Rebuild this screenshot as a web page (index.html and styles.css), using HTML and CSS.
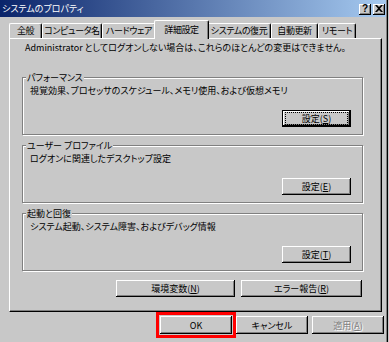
FILE: index.html
```html
<!DOCTYPE html>
<html lang="ja">
<head>
    <meta charset="UTF-8">
    <title>システムのプロパティ</title>
    <link rel="stylesheet" href="styles.css">
</head>
<body>
    <div class="window">
        <div class="titlebar">
            <span class="title">システムのプロパティ</span>
            <span class="caption-btns">
                <button class="cap-btn help">?</button>
                <button class="cap-btn close">
                    <svg width="8" height="7" viewBox="0 0 8 7">
                        <path d="M0 0h2l2 2 2-2h2L5 3.5 8 7H6L4 5 2 7H0l3-3.5z" fill="#000"/>
                    </svg>
                </button>
            </span>
        </div>

        <div class="tabs">
            <span class="tab t-general">全般</span>
            <span class="tab t-name">コンピュータ名</span>
            <span class="tab t-hw">ハードウェア</span>
            <span class="tab t-adv active">詳細設定</span>
            <span class="tab t-restore">システムの復元</span>
            <span class="tab t-update">自動更新</span>
            <span class="tab t-remote">リモート</span>
        </div>

        <div class="panel">
            <p class="note">Administrator としてログオンしない場合は、これらのほとんどの変更はできません。</p>

            <fieldset class="group">
                <legend>パフォーマンス</legend>
                <p class="desc">視覚効果、プロセッサのスケジュール、メモリ使用、および仮想メモリ</p>
                <div class="group-actions">
                    <button class="btn default"><span class="focus">設定(<u>S</u>)</span></button>
                </div>
            </fieldset>

            <fieldset class="group">
                <legend>ユーザー プロファイル</legend>
                <p class="desc">ログオンに関連したデスクトップ設定</p>
                <div class="group-actions">
                    <button class="btn">設定(<u>E</u>)</button>
                </div>
            </fieldset>

            <fieldset class="group">
                <legend>起動と回復</legend>
                <p class="desc">システム起動、システム障害、およびデバッグ情報</p>
                <div class="group-actions">
                    <button class="btn">設定(<u>T</u>)</button>
                </div>
            </fieldset>

            <div class="panel-actions">
                <button class="btn env">環境変数(<u>N</u>)</button>
                <button class="btn err">エラー報告(<u>R</u>)</button>
            </div>
        </div>

        <div class="dialog-actions">
            <button class="btn marked">OK</button>
            <button class="btn">キャンセル</button>
            <button class="btn" disabled>適用(<u>A</u>)</button>
        </div>
    </div>
</body>
</html>
```

FILE: styles.css
```css
* {
    box-sizing: border-box;
}
body {
    margin: 0;
    background: #c8c8c8;
}
body, button {
    font-family: "Noto Sans CJK JP", "Noto Sans", sans-serif;
    font-size: 9px;
    font-feature-settings: "palt";
    color: #000;
}
p {
    margin: 0;
}
.window {
    width: 388px;
    height: 342px;
    overflow: hidden;
    background: #c8c8c8;
    border-right: 1px solid #000;
    box-shadow: inset -1px 0 #808080;
}

/* title bar */
.titlebar {
    display: flex;
    align-items: center;
    justify-content: space-between;
    height: 17px;
    margin-right: 1px;
    padding: 1px 1px 0 2px;
    background: linear-gradient(to right, #0a246a, #a6caf0);
}
.title {
    color: #fff;
    line-height: 14px;
}
.caption-btns {
    display: flex;
    gap: 2px;
}
.cap-btn {
    display: flex;
    align-items: center;
    justify-content: center;
    width: 12px;
    height: 11px;
    padding: 0;
    border: 0;
    background: #c8c8c8;
    box-shadow: inset -1px -1px #000, inset 1px 1px #fff, inset -2px -2px #808080;
}
.cap-btn.help {
    font-family: "Liberation Sans", sans-serif;
    font-weight: bold;
    font-size: 10px;
    line-height: 10px;
    padding-bottom: 1px;
}
.cap-btn svg {
    display: block;
    margin: 0 1px 1px 0;
}

/* tabs */
.tabs {
    display: flex;
    align-items: flex-end;
    height: 18px;
    margin: 3px 0 0 9px;
}
.tab {
    flex: none;
    height: 15px;
    padding: 0;
    line-height: 14px;
    text-align: center;
    letter-spacing: -0.4px;
    white-space: nowrap;
    border-top: 1px solid #fff;
    border-left: 1px solid #fff;
    border-right: 1px solid #000;
    border-radius: 2px 2px 0 0;
    box-shadow: inset -1px 0 #808080;
}
.t-general { width: 33px; }
.t-name { width: 60px; }
.t-hw { width: 54px; }
.t-adv { width: 51px; }
.t-restore { width: 64px; }
.t-update { width: 47px; }
.t-remote { width: 38px; }
.tab.active {
    position: relative;
    z-index: 1;
    width: 55px;
    height: 19px;
    margin: 0 -2px -1px;
    line-height: 17px;
    background: #c8c8c8;
}

/* panel */
.panel {
    margin: 0 5px 0 9px;
    padding: 3px 18px 14px 12px;
    border: 1px solid #000;
    border-top-color: #fff;
    border-left-color: #fff;
    box-shadow: inset -1px -1px #808080;
}
.note {
    padding-left: 3px;
    line-height: 12px;
}
.group {
    margin: 17px 0 0;
    padding: 0 11px 7px 7px;
    min-width: 0;
    border: 1px solid #808080;
    box-shadow: inset 1px 1px #fff, 1px 1px #fff;
}
.group + .group {
    margin-top: 4px;
}
.group legend {
    margin-left: -4px;
    padding: 0 1px;
    line-height: 13px;
    background: #c8c8c8;
}
.desc {
    line-height: 13px;
}
.group-actions {
    display: flex;
    justify-content: flex-end;
    margin-top: 13px;
}
.panel-actions {
    display: flex;
    justify-content: flex-end;
    gap: 6px;
    margin-top: 9px;
    padding-right: 1px;
}
.dialog-actions {
    display: flex;
    justify-content: flex-end;
    gap: 4px;
    margin-top: 4px;
    padding-right: 3px;
}

/* buttons */
.btn {
    height: 17px;
    padding: 0;
    border: 0;
    background: #c8c8c8;
    line-height: 13px;
    box-shadow: inset -1px -1px #000, inset 1px 1px #fff, inset -2px -2px #808080;
}
.group .btn {
    width: 69px;
}
.btn.default {
    border: 1px solid #000;
}
.btn .focus {
    display: block;
    margin: 1px 2px;
    border: 1px dotted #000;
    line-height: 11px;
}
.btn.env {
    width: 119px;
}
.btn.err {
    width: 121px;
}
.dialog-actions .btn {
    width: 72px;
    height: 18px;
}
.btn.marked {
    outline: 3px solid #f00;
    outline-offset: 1px;
}
.btn:disabled {
    color: #808080;
    text-shadow: 1px 1px #fff;
}
```
